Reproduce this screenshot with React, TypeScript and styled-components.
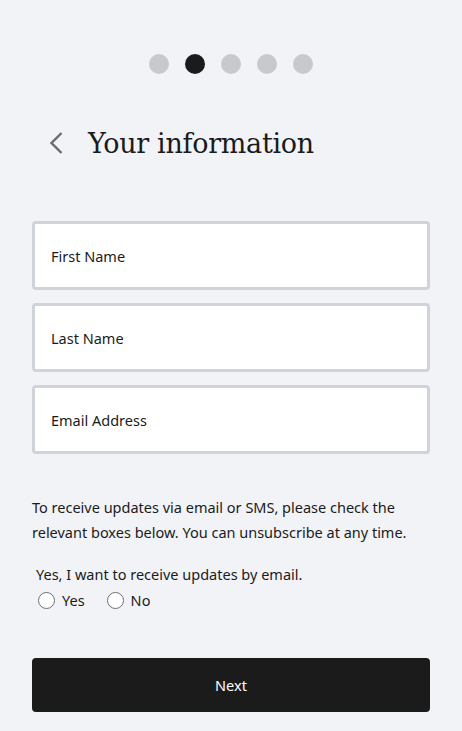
import React, { useState } from "react";
import styled, { createGlobalStyle } from "styled-components";

const GlobalStyle = createGlobalStyle`
  html, body {
    margin: 0;
    padding: 0;
    background: #f2f3f7;
  }
  body {
    font-family: "Noto Sans", "Open Sans", sans-serif;
    color: #1b1b1b;
  }
`;

const STEPS = 5;

function App() {
  const [optIn, setOptIn] = useState<string>("");

  return (
    <Page>
      <GlobalStyle />
      <Steps>
        {Array.from({ length: STEPS }).map((_, i) => (
          <Dot key={i} $active={i === 1} />
        ))}
      </Steps>

      <Header>
        <BackButton aria-label="Back">
          <svg width="14" height="24" viewBox="0 0 14 24">
            <path d="M12.5 2 L2.5 12 L12.5 22" fill="none" stroke="#6b6b6b" strokeWidth="2.4" />
          </svg>
        </BackButton>
        <Title>Your information</Title>
      </Header>

      <Fields>
        <Field placeholder="First Name" />
        <Field placeholder="Last Name" />
        <Field placeholder="Email Address" />
      </Fields>

      <Notice>
        To receive updates via email or SMS, please check the relevant boxes
        below. You can unsubscribe at any time.
      </Notice>

      <Question>Yes, I want to receive updates by email.</Question>
      <Options>
        <Option>
          <Radio
            name="email"
            checked={optIn === "yes"}
            onChange={() => setOptIn("yes")}
          />
          Yes
        </Option>
        <Option>
          <Radio
            name="email"
            checked={optIn === "no"}
            onChange={() => setOptIn("no")}
          />
          No
        </Option>
      </Options>

      <NextButton type="button">Next</NextButton>
    </Page>
  );
}
export default App;

const Page = styled.div`
  width: 398px;
  padding: 54px 32px 19px;
  display: flex;
  flex-direction: column;
`;

const Steps = styled.div`
  display: flex;
  justify-content: center;
  gap: 16px;
`;

const Dot = styled.span<{ $active: boolean }>`
  width: 20px;
  height: 20px;
  border-radius: 50%;
  background: ${(p) => (p.$active ? "#1b1b1b" : "#c8c9cd")};
`;

const Header = styled.div`
  display: flex;
  align-items: center;
  gap: 25px;
  margin-top: 47px;
  margin-bottom: 3px;
  padding-left: 17px;
  height: 44px;
`;

const BackButton = styled.button`
  border: none;
  background: none;
  padding: 0;
  display: flex;
  cursor: pointer;
`;

const Title = styled.h1`
  margin: 0;
  font-family: "DejaVu Serif", "Liberation Serif", serif;
  font-weight: 400;
  font-size: 27px;
  color: #1b1b1b;
  letter-spacing: -0.3px;
`;

const Fields = styled.div`
  display: flex;
  flex-direction: column;
  gap: 13px;
  margin-top: 53px;
`;

const Field = styled.input.attrs({ type: "text" })`
  box-sizing: border-box;
  height: 69px;
  width: 100%;
  border: 3px solid #d0d3da;
  border-radius: 4px;
  background: #fff;
  padding: 0 16px;
  font-family: "Noto Sans", "Open Sans", sans-serif;
  font-size: 14.5px;
  color: #1b1b1b;
  outline: none;

  &::placeholder {
    color: #1b1b1b;
    opacity: 1;
  }
`;

const Notice = styled.p`
  margin: 41px 0 0;
  font-size: 14.5px;
  line-height: 25px;
`;

const Question = styled.div`
  margin-top: 19px;
  padding-left: 4px;
  font-size: 14.5px;
  line-height: 20px;
`;

const Options = styled.div`
  display: flex;
  gap: 22px;
  padding-left: 6px;
  margin-top: 6px;
`;

const Option = styled.label`
  display: flex;
  align-items: center;
  gap: 7px;
  font-size: 14.5px;
  line-height: 20px;
`;

const Radio = styled.input.attrs({ type: "radio" })`
  appearance: none;
  margin: 0;
  width: 17px;
  height: 17px;
  border: 1px solid #6f6f6f;
  border-radius: 50%;
  background: #fff;
  box-sizing: border-box;

  &:checked {
    border: 5px solid #1b1b1b;
  }
`;

const NextButton = styled.button`
  margin-top: 48px;
  height: 54px;
  width: 100%;
  border: none;
  border-radius: 4px;
  background: #1b1b1b;
  color: #fff;
  font-family: "Noto Sans", "Open Sans", sans-serif;
  font-size: 14.5px;
  cursor: pointer;
`;
